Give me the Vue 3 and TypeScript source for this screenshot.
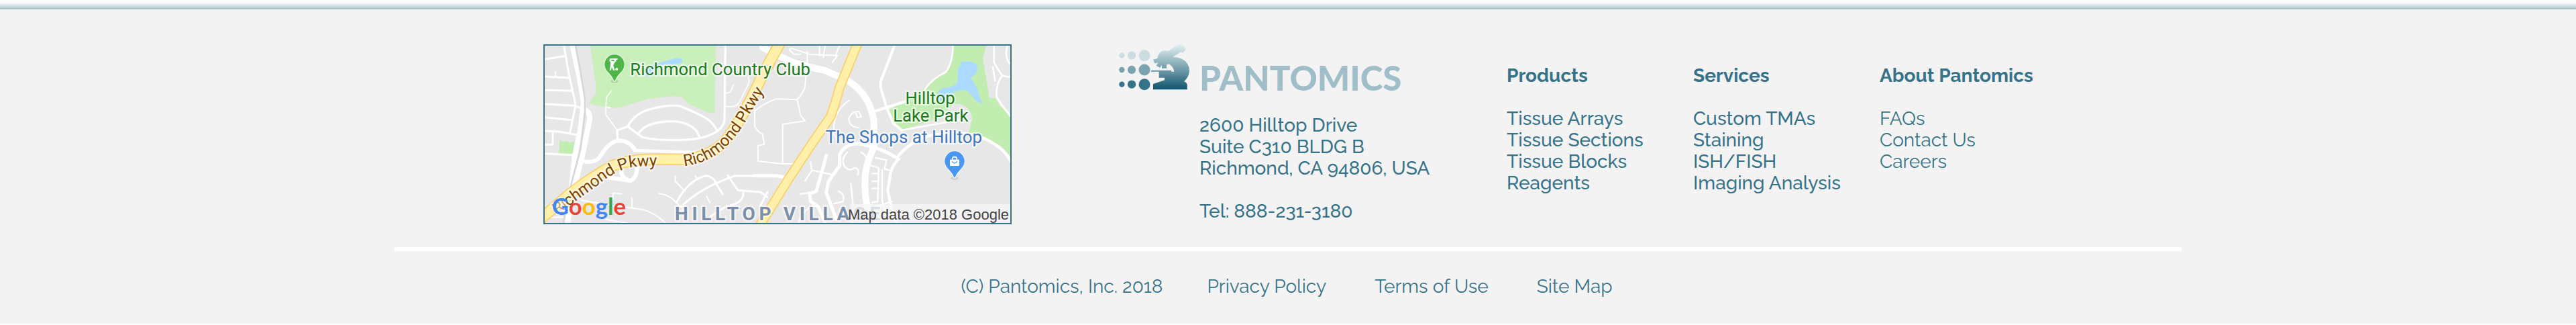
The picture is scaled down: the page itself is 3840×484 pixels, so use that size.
<script setup lang="ts">
interface LinkGroup {
  title: string
  light: boolean
  links: string[]
}

const groups: LinkGroup[] = [
  { title: 'Products', light: false, links: ['Tissue Arrays', 'Tissue Sections', 'Tissue Blocks', 'Reagents'] },
  { title: 'Services', light: false, links: ['Custom TMAs', 'Staining', 'ISH/FISH', 'Imaging Analysis'] },
  { title: 'About Pantomics', light: true, links: ['FAQs', 'Contact Us', 'Careers'] },
]

const legal: string[] = ['Privacy Policy', 'Terms of Use', 'Site Map']

const dots = [
  { cy: 99, fill: '#cbdde1' },
  { cy: 163, fill: '#7ba3af' },
  { cy: 228, fill: '#377388' },
]
</script>

<template>
  <footer class="footer">
    <div class="fade"></div>
    <div class="inner">
      <div class="top">
        <a class="map" href="#map" aria-label="Map of Hilltop Drive, Richmond">
          <svg viewBox="66 54 2082 792" preserveAspectRatio="xMidYMid slice">
            <rect x="66" y="54" width="2082" height="792" fill="#e7e7e7" />
            <!-- parks and lakes -->
            <path fill="#c9efbb" d="M270 54H832L826 356Q805 356 780 346L715 318Q695 305 688 290Q670 280 640 280Q580 284 530 292L450 315Q400 334 370 332L290 320L268 310Q272 290 292 276L296 240Z" />
            <path fill="#c2edb0" d="M133 477L150 484L165 479L180 487L200 480L192 540L130 534Z" />
            <path fill="#aadaff" d="M508 182L524 155L545 145Q580 128 625 118Q650 108 670 110Q690 118 678 132Q640 140 590 142L540 178L528 196Z" />
            <g transform="translate(1050 0)">
              <path fill="#c2edb0" d="M842 54H992L975 108L1005 288H1030L1050 320L1100 365V548L1060 505L1000 472L912 444L928 380Q925 340 885 318Q850 305 830 330L760 385L610 432L575 400L555 345L620 300L700 255L760 200L810 172L840 120Z" />
              <path fill="#aadaff" d="M880 126Q920 120 940 132Q955 148 950 168Q940 190 922 198L945 235L972 314Q945 308 925 275L905 254Q880 248 850 260L800 298Q775 308 765 288Q770 260 795 244Q850 240 862 215L864 160Z" />
            </g>
            <!-- minor streets -->
            <g fill="none" stroke="#fff" stroke-linejoin="round" stroke-linecap="round">
              <path stroke-width="9" d="M152 54L172 170L204 320L180 438M66 115L160 100M66 192L178 198M66 253L190 256M66 315L200 322L240 338M66 374L186 386M66 435L130 438L208 452M102 444V496H66M66 536L192 542" />
              <path stroke-width="5" d="M114 170V196M363 258L342 284L338 360L390 432M344 328L360 332M975 195Q985 210 975 230L940 300Q925 328 905 326H870M910 228Q898 264 888 265H870" />
              <path stroke-width="10" d="M874 54L870 385Q866 430 800 455Q750 476 640 476Q540 474 500 462L438 415M438 415Q465 360 530 340Q620 315 670 324Q730 345 790 380Q820 400 835 430M390 432L438 415M390 432L392 470M486 448Q510 400 610 393Q700 385 745 435L758 462" />
              <path stroke-width="18" d="M240 570Q285 580 310 555Q345 495 385 480Q440 470 470 520M480 570Q485 640 450 658Q410 650 408 615Q410 595 430 590M450 658L345 642" />
              <path stroke-width="13" d="M470 522L720 530Q820 525 890 450" />
              <path stroke-width="9" d="M655 755Q710 650 790 635Q820 640 830 665L862 718M680 770Q760 690 915 636H1110M885 634L930 700L1030 708Q1050 720 1060 730M955 710Q955 760 880 770L810 815M1062 708L1030 770" />
              <path stroke-width="6" d="M650 635V660L687 698M738 635L750 652M577 715Q620 720 650 750L700 800M790 728L805 755M230 745L380 770L500 785Q560 800 605 846M370 740L372 712L410 717M455 735L458 780M340 830L430 846M66 822L150 820" />
            </g>
            <g transform="translate(1050 0)" fill="none" stroke="#fff" stroke-linejoin="round" stroke-linecap="round">
              <path stroke-width="6" d="M110 72L118 65L200 92L325 98L303 128M110 72L130 92L160 92M190 80V130L180 240Q165 275 145 295L50 292Q0 310 -45 345V415Q-30 440 -10 450L-2 495L-30 500V570L80 582H140Q190 560 230 440M145 295L160 365L180 390L80 405V580M245 54V100M270 54L262 105M335 54L315 100M378 298Q300 350 310 450L330 485M420 420Q380 420 375 380Q390 345 420 348L432 372L415 376L405 350" />
              <path stroke-width="12" d="M580 54L518 215V240L545 330L575 400L612 432M495 346L545 330L640 300" />
              <path stroke-width="8" d="M842 54Q840 130 810 172Q750 200 715 250M612 432L880 384M1025 54V130L1060 185Q1090 198 1098 190M1060 190Q1036 220 1036 280L1060 320L1100 370M1020 150L1030 210M1085 54Q1070 110 1098 135" />
              <path stroke-width="13" d="M600 560Q565 590 560 640L550 700L570 800L590 846M590 555Q650 480 740 455Q900 430 985 470Q1070 510 1100 570" />
              <path stroke-width="15" d="M590 555Q520 510 420 492Q360 490 335 540V590L285 660L275 710L320 830M-50 635H40Q75 635 100 650M275 545L255 620L230 705L200 715L205 750L240 775L270 846" />
              <path stroke-width="7" d="M205 575L210 610L300 630M210 612L180 658M230 705L158 717M370 530Q340 560 355 590Q375 620 400 600Q425 600 415 632M430 530Q460 545 455 570M385 670L395 770M330 705Q360 715 350 750L310 760M495 555L545 565L535 605M475 590L510 600L505 750L480 755M480 625H510M480 660H510M480 692H510M525 610V745L540 800M535 605L560 612M505 770L570 750M230 770Q180 770 150 846" />
              <path stroke-width="30" d="M-10 62Q60 100 130 130Q220 155 270 165L370 210Q470 270 488 390V510Q445 590 448 680Q450 790 490 846" />
            </g>
            <!-- avenue -->
            <path fill="none" stroke="#fff" stroke-width="24" d="M190 54L220 190L240 310L225 430L200 550L170 846M240 340Q272 345 266 390L240 520L205 660L165 846" />
            <path fill="none" stroke="#d3d8dc" stroke-width="8" d="M204 54L224 160L246 290V350L225 520L180 690M170 730L150 846" />
            <!-- parkways -->
            <g fill="none" stroke-linejoin="round">
              <path stroke="#f9cf66" stroke-width="52" d="M40 835L180 715Q270 645 370 590Q450 560 560 562H690Q830 550 900 445Q970 340 1040 185L1130 20" />
              <path stroke="#ffefa8" stroke-width="42" d="M40 835L180 715Q270 645 370 590Q450 560 560 562H690Q830 550 900 445Q970 340 1040 185L1130 20" />
              <path stroke="#f9cf66" stroke-width="44" d="M1020 870L1150 660L1255 500L1345 370L1365 310L1385 240L1475 20" />
              <path stroke="#ffefa8" stroke-width="34" d="M1020 870L1150 660L1255 500L1345 370L1365 310L1385 240L1475 20" />
            </g>
            <path id="parkway-west" fill="none" d="M122 810L200 752L300 680Q370 620 440 600Q480 590 600 592" />
            <path id="parkway-east" fill="none" d="M690 592Q790 582 870 512Q950 430 985 355L1075 215" />
            <g class="label">
              <text class="road"><textPath href="#parkway-west"><tspan fill-opacity=".45">Ri</tspan>chmond Pkwy</textPath></text>
              <text class="road"><textPath href="#parkway-east">Richmond Pkwy</textPath></text>
              <text class="park" x="448" y="185">Richmond Country Club</text>
              <text class="park" x="1790" y="315" text-anchor="middle">Hilltop</text>
              <text class="park" x="1792" y="393" text-anchor="middle">Lake Park</text>
              <text class="shop" x="1322" y="489">The Shops at Hilltop</text>
              <text class="district" x="648" y="833">HILLTOP VILLAGE</text>
            </g>
            <!-- golf pin -->
            <ellipse cx="378" cy="213" rx="16" ry="7" fill="#a9cfa0" />
            <path fill="#4fb548" stroke="#e4f6dd" stroke-width="4" d="M378 92A46 46 0 0 1 424 138C424 172 388 182 382 213H374C368 182 332 172 332 138A46 46 0 0 1 378 92Z" />
            <path fill="none" stroke="#fff" stroke-width="6" d="M392 114H360L358 122L378 128" />
            <path fill="#fff" d="M360 126L382 126L372 142L380 164H372L366 150L362 164H356L360 142Z" />
            <circle cx="381" cy="121" r="5" fill="#fff" />
            <circle cx="388" cy="159" r="6" fill="#fff" />
            <!-- shopping pin -->
            <ellipse cx="1899" cy="646" rx="17" ry="7" fill="#c6cdd3" />
            <path fill="#4a96f3" stroke="#eef3f8" stroke-width="4" d="M1899 524A46 46 0 0 1 1945 570C1945 604 1909 614 1903 645H1895C1889 614 1853 604 1853 570A46 46 0 0 1 1899 524Z" />
            <path fill="#fff" d="M1878 563H1920V591H1878Z" />
            <path fill="none" stroke="#fff" stroke-width="5" d="M1889 565V560Q1889 551 1899 551Q1909 551 1909 560V565" />
            <path fill="none" stroke="#4a96f3" stroke-width="4" d="M1888 571Q1899 588 1910 571" />
            <text class="google" x="98" y="809"><tspan fill="#4285f4">G</tspan><tspan fill="#ea4335">o</tspan><tspan fill="#fbbc05">o</tspan><tspan fill="#4285f4">g</tspan><tspan fill="#34a853">l</tspan><tspan fill="#ea4335">e</tspan></text>
            <rect x="1432" y="762" width="716" height="84" fill="#f7f7f7" fill-opacity=".75" />
            <text class="credit" x="2142" y="830" text-anchor="end">Map data ©2018 Google</text>
          </svg>
        </a>

        <div class="brand">
          <svg class="mark" viewBox="84 40 318 216" aria-hidden="true">
            <defs>
              <linearGradient id="scope" x1="0" y1="40" x2="0" y2="252" gradientUnits="userSpaceOnUse">
                <stop offset="0" stop-color="#f0f6f8" />
                <stop offset=".33" stop-color="#a5c2ca" />
                <stop offset=".6" stop-color="#6b98a6" />
                <stop offset="1" stop-color="#0d536c" />
              </linearGradient>
            </defs>
            <g v-for="row in dots" :key="row.cy" :fill="row.fill">
              <circle cx="97" :cy="row.cy" r="12.5" />
              <circle cx="141" :cy="row.cy" r="18.5" />
              <circle cx="198" :cy="row.cy" r="25.5" />
            </g>
            <path fill="url(#scope)" d="M361 41L384 73L368 87L361 83L325 106Q356 106 378 122Q400 142 399 168Q397 195 375 215Q389 220 389 232V251H237V226L288 209V198H263V171H228V165H319V171H331Q328 150 308 137L297 140V156H276V142L267 153L251 144L259 131L243 134L237 117L255 112Q262 78 290 77Q298 77 303 80L352 48Z" />
          </svg>
          <span class="wordmark">PANTOMICS</span>
          <address class="address">
            2600 Hilltop Drive<br />
            Suite C310 BLDG B<br />
            Richmond, CA 94806, USA<br />
            <br />
            Tel: 888-231-3180
          </address>
        </div>

        <nav v-for="group in groups" :key="group.title" class="group" :class="{ light: group.light }" :aria-label="group.title">
          <h2>{{ group.title }}</h2>
          <ul>
            <li v-for="link in group.links" :key="link"><a href="#">{{ link }}</a></li>
          </ul>
        </nav>
      </div>

      <div class="legal">
        <span>(C) Pantomics, Inc. 2018</span>
        <nav class="legal-links" aria-label="Legal">
          <a v-for="item in legal" :key="item" href="#">{{ item }}</a>
        </nav>
      </div>
    </div>
  </footer>
</template>

<style>
body {
  margin: 0;
  background: #fdfdfd;
}
</style>

<style scoped>
.footer {
  background: #f3f3f3;
  color: #377388;
  font-family: Raleway, Lato, sans-serif;
  font-size: 28px;
  font-weight: 500;
  line-height: 32px;
}
.fade {
  height: 14px;
  background: linear-gradient(#fff, #f3f8f9 35%, #a1c0c6);
}
.inner {
  width: 69.375%;
  margin: 0 auto;
}
.top {
  display: grid;
  grid-template-columns: 858fr 578fr 278fr 278fr 450fr;
  align-items: start;
  padding: 52px 0 34px 222px;
  border-bottom: 6px solid #fff;
}
.map {
  display: block;
  width: 694px;
  max-width: 90%;
  border: 2px solid #377388;
}
.map svg {
  display: block;
  width: 100%;
  height: 264px;
}
.label text {
  font-family: Roboto, sans-serif;
  font-size: 77px;
  font-weight: 400;
  paint-order: stroke;
  stroke: #fff;
  stroke-opacity: .6;
  stroke-width: 14px;
  stroke-linejoin: round;
}
.label .road {
  font-size: 72px;
  fill: #7a4100;
}
.label .park {
  fill: #1c7a1f;
}
.label .shop {
  font-size: 78px;
  fill: #3f75ba;
}
.label .district {
  font-size: 84px;
  font-weight: 700;
  letter-spacing: 17px;
  fill: #7b8fa9;
}
.google {
  font-family: Lato, sans-serif;
  font-size: 104px;
  font-weight: 700;
}
.credit {
  font-family: "Liberation Sans", Arial, sans-serif;
  font-size: 66px;
  font-weight: 400;
  fill: #444;
}
.brand {
  display: grid;
  grid-template-columns: 106px 1fr;
  column-gap: 14px;
  margin-top: -3px;
}
.mark {
  display: block;
  width: 106px;
  height: 72px;
}
.wordmark {
  align-self: end;
  color: #a0bec8;
  font-family: Lato, sans-serif;
  font-size: 51px;
  font-weight: 900;
  line-height: 38px;
}
.address {
  grid-column: 2;
  margin-top: 36px;
  font-style: normal;
  white-space: nowrap;
}
.group {
  padding-top: 31px;
  white-space: nowrap;
}
.group h2 {
  margin: 0 0 32px;
  font-size: 28px;
  font-weight: 700;
  line-height: 32px;
}
.group ul {
  margin: 0;
  padding: 0;
  list-style: none;
}
a {
  color: inherit;
  text-decoration: none;
}
.light ul {
  font-weight: 400;
}
.legal {
  display: flex;
  flex-wrap: wrap;
  justify-content: center;
  gap: 16px 66px;
  padding: 37px 4px 39px 0;
  font-weight: 400;
}
.legal-links {
  display: flex;
  flex-wrap: wrap;
  gap: 16px 72px;
}
@media (max-width: 2400px) {
  .inner {
    width: 92%;
  }
  .top {
    display: flex;
    flex-wrap: wrap;
    gap: 32px 64px;
    padding-left: 0;
  }
}
</style>
